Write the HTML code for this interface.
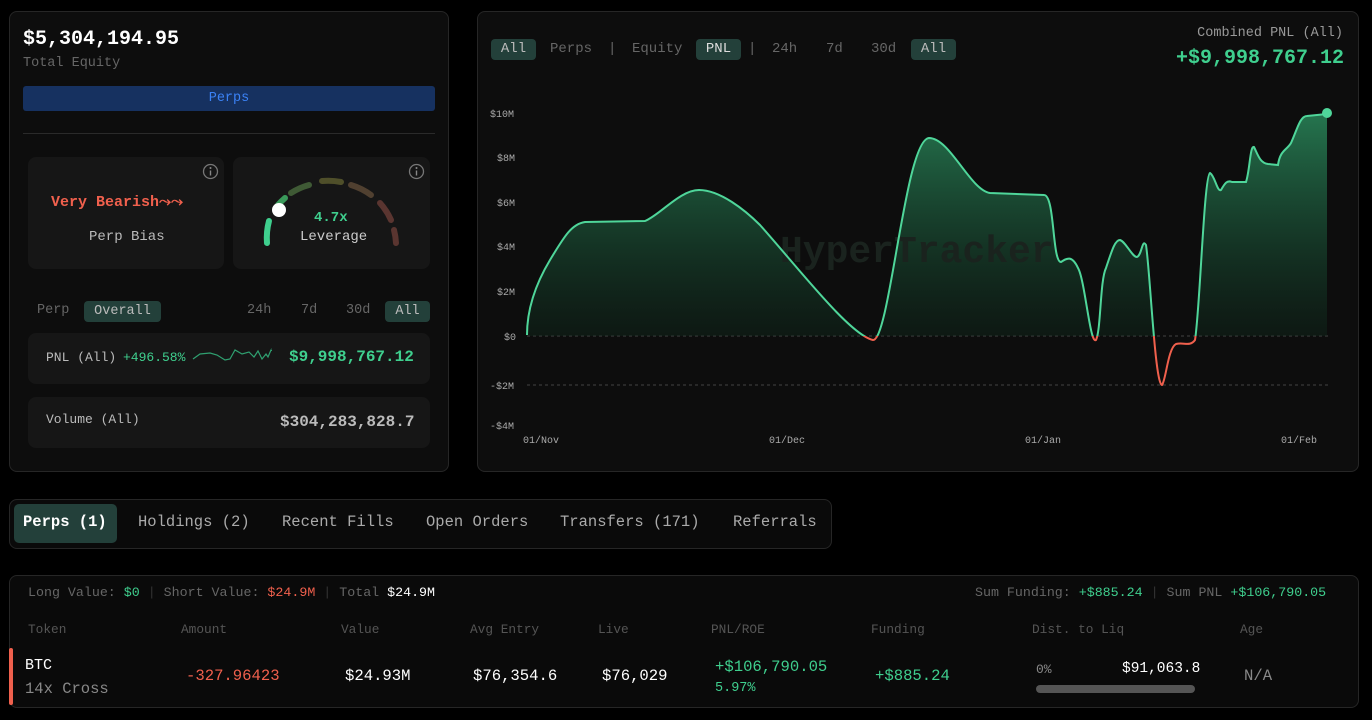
<!DOCTYPE html>
<html><head><meta charset="utf-8">
<style>
*{box-sizing:border-box;margin:0;padding:0}
body{width:1372px;height:720px;background:#000;font-family:"Liberation Mono",monospace;color:#ddd;position:relative;overflow:hidden}
.a{position:absolute;white-space:nowrap}
.card{position:absolute;background:#0d0d0d;border:1px solid #262626;border-radius:8px}
.sub{position:absolute;background:#161616;border-radius:8px}
.g{color:#3fcf8e}.r{color:#f0604d}.m{color:#8a8a8a}
.pill{position:absolute;background:#23403a;border-radius:4px;color:#cfe;text-align:center}
.n{font-family:"Liberation Mono",monospace}
.h{top:622px;font-size:12.8px;color:#555}
.v{top:667px;font-size:15.6px}
.t{top:513px;font-size:15.5px;color:#aaa}
</style></head><body>

<!-- left card -->
<div class="card" style="left:9px;top:11px;width:440px;height:461px"></div>
<div class="a" style="left:23px;top:28px;font-size:20px;font-weight:bold;color:#fff">$5,304,194.95</div>
<div class="a m" style="left:23px;top:56px;font-size:13.5px;color:#666">Total Equity</div>
<div class="a" style="left:23px;top:86px;width:412px;height:25px;background:#163160;border-radius:3px;color:#3b82f6;font-size:13.5px;text-align:center;line-height:25px">Perps</div>
<div class="a" style="left:23px;top:133px;width:412px;height:1px;background:#2a2a2a"></div>

<div class="sub" style="left:28px;top:157px;width:196px;height:112px"></div>
<div class="a" style="left:51px;top:193px;font-size:15px;font-weight:bold;color:#f0604d">Very Bearish⤳⤳</div>
<div class="a" style="left:89px;top:229px;font-size:14px;color:#bbb">Perp Bias</div>
<svg class="a" style="left:202px;top:163px" width="17" height="17"><circle cx="8.5" cy="8.5" r="7" fill="none" stroke="#777" stroke-width="1.3"/><circle cx="8.5" cy="5" r="1" fill="#888"/><line x1="8.5" y1="7.5" x2="8.5" y2="12.5" stroke="#888" stroke-width="1.4"/></svg>

<div class="sub" style="left:233px;top:157px;width:197px;height:112px"></div>
<svg class="a" style="left:408px;top:163px" width="17" height="17"><circle cx="8.5" cy="8.5" r="7" fill="none" stroke="#777" stroke-width="1.3"/><circle cx="8.5" cy="5" r="1" fill="#888"/><line x1="8.5" y1="7.5" x2="8.5" y2="12.5" stroke="#888" stroke-width="1.4"/></svg>
<svg class="a" style="left:233px;top:157px" width="197" height="112">
<g fill="none" stroke-width="6" stroke-linecap="round">
<path d="M34 86 A65 65 0 0 1 36 64" stroke="#3fcf8e"/>
<path d="M45 48 A65 65 0 0 1 52 41" stroke="#3a9a5a"/>
<path d="M58 36 A65 65 0 0 1 76 28" stroke="#3f5a35"/>
<path d="M89 24 A65 65 0 0 1 108 25" stroke="#4f4f2a"/>
<path d="M118 28 A65 65 0 0 1 138 38" stroke="#504030"/>
<path d="M147 46 A65 65 0 0 1 158 63" stroke="#5a3530"/>
<path d="M161 73 A65 65 0 0 1 163 86" stroke="#5a3530"/>
</g>
<circle cx="46" cy="53" r="7" fill="#fff"/>
</svg>
<div class="a g" style="left:314px;top:210px;font-size:14px;font-weight:bold">4.7x</div>
<div class="a" style="left:300px;top:229px;font-size:14px;color:#ccc">Leverage</div>

<div class="a" style="left:37px;top:303px;font-size:13.5px;color:#666">Perp</div>
<div class="pill" style="left:84px;top:301px;width:77px;height:21px;font-size:13.5px;line-height:21px;color:#bbb">Overall</div>
<div class="a" style="left:247px;top:303px;font-size:13.5px;color:#666">24h</div>
<div class="a" style="left:301px;top:303px;font-size:13.5px;color:#666">7d</div>
<div class="a" style="left:346px;top:303px;font-size:13.5px;color:#666">30d</div>
<div class="pill" style="left:385px;top:301px;width:45px;height:21px;font-size:13.5px;line-height:21px;color:#bbb">All</div>

<div class="sub" style="left:28px;top:333px;width:402px;height:51px"></div>
<div class="a" style="left:46px;top:350px;font-size:13px;color:#bbb">PNL (All)</div>
<div class="a g" style="left:123px;top:350px;font-size:13px">+496.58%</div>
<svg class="a" style="left:192px;top:345px" width="80" height="24"><polyline fill="none" stroke="#2fa070" stroke-width="1.2" points="1,14 8,9 18,8 25,10 33,15 38,14 43,5 50,9 57,7 62,12 66,6 70,14 74,9 76,12 79,5 82,6 80,3"/></svg>
<div class="a g" style="left:289px;top:348px;font-size:16px;font-weight:bold">$9,998,767.12</div>

<div class="sub" style="left:28px;top:397px;width:402px;height:51px"></div>
<div class="a" style="left:46px;top:412px;font-size:13px;color:#bbb">Volume (All)</div>
<div class="a" style="left:280px;top:413px;font-size:16px;font-weight:bold;color:#bbb">$304,283,828.7</div>

<!-- chart card -->
<div class="card" style="left:477px;top:11px;width:882px;height:461px"></div>
<div class="pill" style="left:491px;top:39px;width:45px;height:21px;font-size:14px;line-height:21px;color:#bbb">All</div>
<div class="a" style="left:550px;top:41px;font-size:14px;color:#666">Perps</div>
<div class="a" style="left:608px;top:41px;font-size:14px;color:#666">|</div>
<div class="a" style="left:632px;top:41px;font-size:14px;color:#666">Equity</div>
<div class="pill" style="left:696px;top:39px;width:45px;height:21px;font-size:14px;line-height:21px;color:#ddd">PNL</div>
<div class="a" style="left:748px;top:41px;font-size:14px;color:#666">|</div>
<div class="a" style="left:772px;top:41px;font-size:14px;color:#666">24h</div>
<div class="a" style="left:826px;top:41px;font-size:14px;color:#666">7d</div>
<div class="a" style="left:871px;top:41px;font-size:14px;color:#666">30d</div>
<div class="pill" style="left:911px;top:39px;width:45px;height:21px;font-size:14px;line-height:21px;color:#bbb">All</div>
<div class="a" style="right:29px;top:26px;font-size:13.5px;color:#999">Combined PNL (All)</div>
<div class="a g" style="right:28px;top:47px;font-size:20px;font-weight:bold">+$9,998,767.12</div>

<svg class="a" style="left:0;top:0" width="1372" height="480">
<defs>
<linearGradient id="gf" x1="0" y1="110" x2="0" y2="336" gradientUnits="userSpaceOnUse"><stop offset="0" stop-color="#2a8a5c" stop-opacity=".85"/><stop offset="1" stop-color="#0f2a1c" stop-opacity=".4"/></linearGradient>
<clipPath id="up"><rect x="0" y="0" width="1372" height="336"/></clipPath>
<clipPath id="dn"><rect x="0" y="336" width="1372" height="200"/></clipPath>
</defs>
<g font-size="10" fill="#aaa" font-family="Liberation Mono,monospace">
<text x="490" y="117">$10M</text><text x="497" y="161">$8M</text><text x="497" y="206">$6M</text><text x="497" y="250">$4M</text><text x="497" y="295">$2M</text><text x="504" y="340">$0</text><text x="490" y="389">-$2M</text><text x="490" y="429">-$4M</text>
<text x="523" y="443">01/Nov</text><text x="769" y="443">01/Dec</text><text x="1025" y="443">01/Jan</text><text x="1281" y="443">01/Feb</text>
</g>
<line x1="527" y1="336" x2="1328" y2="336" stroke="#444" stroke-dasharray="3 3"/>
<line x1="527" y1="385" x2="1328" y2="385" stroke="#444" stroke-dasharray="3 3"/>
<path id="c" d="M527 335 C527 310 535 285 550 260 C565 235 572 224 585 222 L645 221 C660 215 680 190 699 190 C720 190 745 210 760 225 C800 270 850 335 873 340 C890 340 905 140 929 138 C950 138 970 190 990 193 L1044 195 C1055 195 1052 262 1061 262 C1067 258 1072 255 1078 268 C1085 280 1090 345 1096 340 C1101 330 1100 280 1106 268 C1112 250 1115 240 1120 240 C1126 242 1132 257 1137 257 C1142 255 1142 238 1146 245 C1150 270 1155 385 1162 385 C1166 380 1168 348 1176 344 C1184 342 1190 347 1195 340 C1200 310 1204 175 1210 173 C1215 176 1217 192 1221 190 C1225 183 1227 180 1232 182 L1246 182 C1250 170 1250 145 1254 147 C1258 155 1260 163 1268 164 L1278 165 C1280 150 1287 150 1291 143 C1297 130 1300 116 1307 116 L1327 114" fill="none"/>
<path d="M527 335 C527 310 535 285 550 260 C565 235 572 224 585 222 L645 221 C660 215 680 190 699 190 C720 190 745 210 760 225 C800 270 850 335 873 340 C890 340 905 140 929 138 C950 138 970 190 990 193 L1044 195 C1055 195 1052 262 1061 262 C1067 258 1072 255 1078 268 C1085 280 1090 345 1096 340 C1101 330 1100 280 1106 268 C1112 250 1115 240 1120 240 C1126 242 1132 257 1137 257 C1142 255 1142 238 1146 245 C1150 270 1155 385 1162 385 C1166 380 1168 348 1176 344 C1184 342 1190 347 1195 340 C1200 310 1204 175 1210 173 C1215 176 1217 192 1221 190 C1225 183 1227 180 1232 182 L1246 182 C1250 170 1250 145 1254 147 C1258 155 1260 163 1268 164 L1278 165 C1280 150 1287 150 1291 143 C1297 130 1300 116 1307 116 L1327 114 L1327 336 L527 336Z" fill="url(#gf)" clip-path="url(#up)"/>
<text x="780" y="262" font-size="38" font-weight="bold" fill="#1a231e" font-family="Liberation Mono,monospace">HyperTracker</text>
<use href="#c" stroke="#4fd69a" stroke-width="2" clip-path="url(#up)"/>
<use href="#c" stroke="#f0604d" stroke-width="2" clip-path="url(#dn)"/>
<circle cx="1327" cy="113" r="5" fill="#4fd69a"/>
</svg>

<!-- tabs -->
<div class="card" style="left:9px;top:499px;width:823px;height:50px;background:#0a0a0a"></div>
<div class="a" style="left:14px;top:504px;width:103px;height:39px;background:#23403a;border-radius:5px"></div>
<div class="a n t" style="left:23px;font-weight:bold;color:#fff">Perps (1)</div>
<div class="a n t" style="left:138px">Holdings (2)</div>
<div class="a n t" style="left:282px">Recent Fills</div>
<div class="a n t" style="left:426px">Open Orders</div>
<div class="a n t" style="left:560px">Transfers (171)</div>
<div class="a n t" style="left:733px">Referrals</div>

<!-- table -->
<div class="card" style="left:9px;top:575px;width:1350px;height:133px;background:#0a0a0a"></div>
<div class="a n" style="left:28px;top:585px;font-size:13.3px;color:#666">Long Value: <span class="g">$0</span> <span style="color:#333">|</span> Short Value: <span class="r">$24.9M</span> <span style="color:#333">|</span> Total <span style="color:#fff">$24.9M</span></div>
<div class="a n" style="left:975px;top:585px;font-size:13.3px;color:#666">Sum Funding: <span class="g">+$885.24</span> <span style="color:#333">|</span> Sum PNL <span class="g">+$106,790.05</span></div>
<div class="a n h" style="left:28px">Token</div>
<div class="a n h" style="left:181px">Amount</div>
<div class="a n h" style="left:341px">Value</div>
<div class="a n h" style="left:470px">Avg Entry</div>
<div class="a n h" style="left:598px">Live</div>
<div class="a n h" style="left:711px">PNL/ROE</div>
<div class="a n h" style="left:871px">Funding</div>
<div class="a n h" style="left:1032px">Dist. to Liq</div>
<div class="a n h" style="left:1240px">Age</div>
<div class="a" style="left:9px;top:648px;width:4px;height:57px;background:#f0604d;border-radius:2px"></div>
<div class="a n" style="left:25px;top:657px;font-size:15px;color:#fff">BTC</div>
<div class="a n" style="left:25px;top:680px;font-size:15.5px;color:#888">14x Cross</div>
<div class="a n r v" style="left:186px">-327.96423</div>
<div class="a n v" style="left:345px;color:#fff">$24.93M</div>
<div class="a n v" style="left:473px;color:#fff">$76,354.6</div>
<div class="a n v" style="left:602px;color:#fff">$76,029</div>
<div class="a n g" style="left:715px;top:658px;font-size:15.6px">+$106,790.05</div>
<div class="a n g" style="left:715px;top:681px;font-size:13.5px">5.97%</div>
<div class="a n g v" style="left:875px">+$885.24</div>
<div class="a n" style="left:1036px;top:662px;font-size:13px;color:#888">0%</div>
<div class="a n" style="left:1122px;top:661px;font-size:14.5px;color:#fff">$91,063.8</div>
<div class="a" style="left:1036px;top:685px;width:159px;height:8px;background:#555;border-radius:4px"></div>
<div class="a n v" style="left:1244px;color:#888">N/A</div>
</body></html>
